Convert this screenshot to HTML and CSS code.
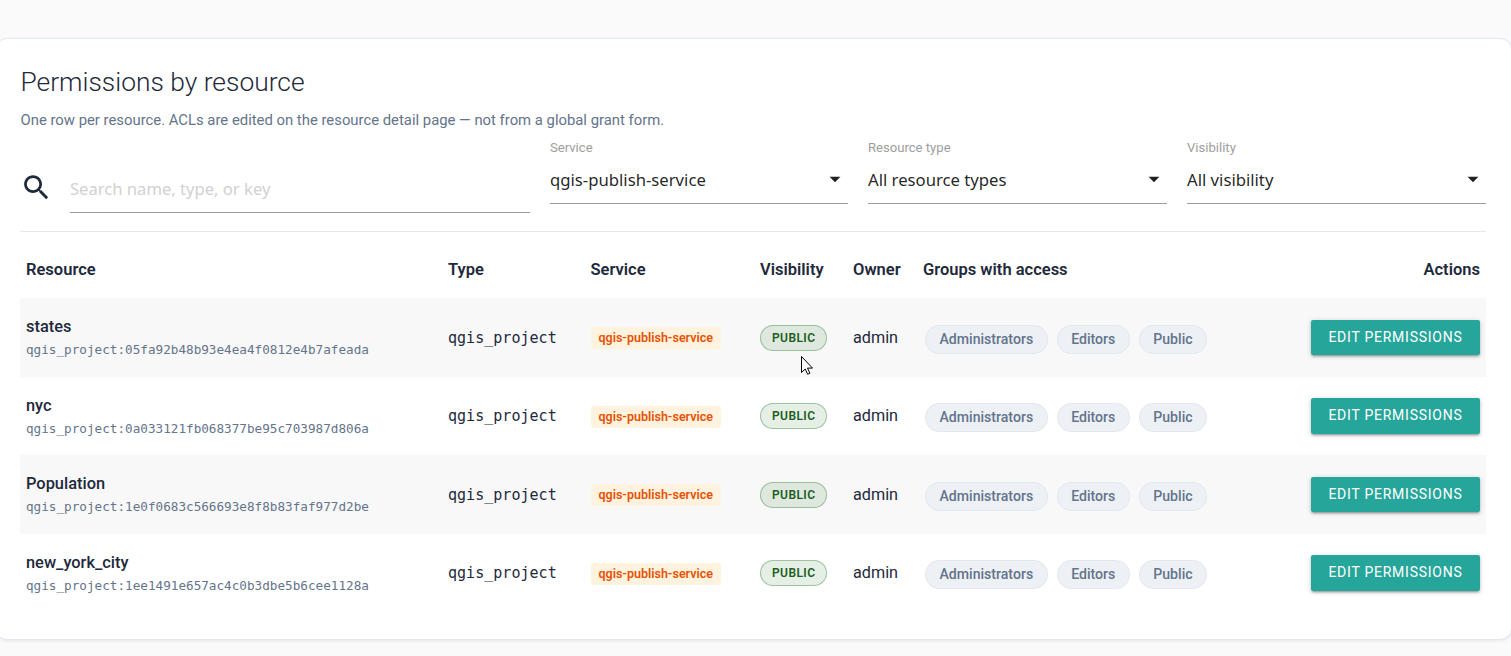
FILE: index.html
```html
<!DOCTYPE html>
<html lang="en">
<head>
  <meta charset="UTF-8">
  <meta name="viewport" content="width=device-width, initial-scale=1.0">
  <title>Permissions by resource</title>
  <link rel="stylesheet" href="styles.css">
</head>
<body>
  <section class="card">
    <h1 class="card-title">Permissions by resource</h1>
    <p class="card-hint">One row per resource. ACLs are edited on the resource detail page — not from a global grant form.</p>

    <div class="filters">
      <div class="search-field">
        <svg class="search-icon" viewBox="0 0 24 24"><path d="M15.5 14h-.79l-.28-.27C15.41 12.59 16 11.11 16 9.5 16 5.91 13.09 3 9.5 3S3 5.91 3 9.5 5.91 16 9.5 16c1.61 0 3.09-.59 4.23-1.57l.27.28v.79l5 4.99L20.49 19l-4.99-5zm-6 0C7.01 14 5 11.99 5 9.5S7.01 5 9.5 5 14 7.01 14 9.5 11.99 14 9.5 14z"/></svg>
        <input class="search-input" type="text" placeholder="Search name, type, or key">
      </div>
      <div class="select-field">
        <label>Service</label>
        <div class="select-value">
          <span>qgis-publish-service</span>
          <svg class="caret" viewBox="0 0 24 24"><path d="M7 10l5 5 5-5z"/></svg>
        </div>
      </div>
      <div class="select-field">
        <label>Resource type</label>
        <div class="select-value">
          <span>All resource types</span>
          <svg class="caret" viewBox="0 0 24 24"><path d="M7 10l5 5 5-5z"/></svg>
        </div>
      </div>
      <div class="select-field">
        <label>Visibility</label>
        <div class="select-value">
          <span>All visibility</span>
          <svg class="caret" viewBox="0 0 24 24"><path d="M7 10l5 5 5-5z"/></svg>
        </div>
      </div>
    </div>

    <table class="acl-table">
      <colgroup>
        <col class="col-resource">
        <col class="col-type">
        <col class="col-service">
        <col class="col-visibility">
        <col class="col-owner">
        <col class="col-groups">
        <col class="col-actions">
      </colgroup>
      <thead>
        <tr>
          <th>Resource</th>
          <th>Type</th>
          <th>Service</th>
          <th>Visibility</th>
          <th>Owner</th>
          <th>Groups with access</th>
          <th class="actions">Actions</th>
        </tr>
      </thead>
      <tbody>
        <tr>
          <td><div class="name">states</div><div class="key">qgis_project:05fa92b48b93e4ea4f0812e4b7afeada</div></td>
          <td><code>qgis_project</code></td>
          <td><span class="service">qgis-publish-service</span></td>
          <td><span class="visibility">Public</span></td>
          <td>admin</td>
          <td><div class="groups"><span class="chip">Administrators</span><span class="chip">Editors</span><span class="chip">Public</span></div></td>
          <td class="actions"><a class="btn">Edit permissions</a></td>
        </tr>
        <tr>
          <td><div class="name">nyc</div><div class="key">qgis_project:0a033121fb068377be95c703987d806a</div></td>
          <td><code>qgis_project</code></td>
          <td><span class="service">qgis-publish-service</span></td>
          <td><span class="visibility">Public</span></td>
          <td>admin</td>
          <td><div class="groups"><span class="chip">Administrators</span><span class="chip">Editors</span><span class="chip">Public</span></div></td>
          <td class="actions"><a class="btn">Edit permissions</a></td>
        </tr>
        <tr>
          <td><div class="name">Population</div><div class="key">qgis_project:1e0f0683c566693e8f8b83faf977d2be</div></td>
          <td><code>qgis_project</code></td>
          <td><span class="service">qgis-publish-service</span></td>
          <td><span class="visibility">Public</span></td>
          <td>admin</td>
          <td><div class="groups"><span class="chip">Administrators</span><span class="chip">Editors</span><span class="chip">Public</span></div></td>
          <td class="actions"><a class="btn">Edit permissions</a></td>
        </tr>
        <tr>
          <td><div class="name">new_york_city</div><div class="key">qgis_project:1ee1491e657ac4c0b3dbe5b6cee1128a</div></td>
          <td><code>qgis_project</code></td>
          <td><span class="service">qgis-publish-service</span></td>
          <td><span class="visibility">Public</span></td>
          <td>admin</td>
          <td><div class="groups"><span class="chip">Administrators</span><span class="chip">Editors</span><span class="chip">Public</span></div></td>
          <td class="actions"><a class="btn">Edit permissions</a></td>
        </tr>
      </tbody>
    </table>
  </section>

  <svg class="pointer" viewBox="0 0 12 19"><path d="M.5.5v16l3.7-3.5 2.4 5.2 2.3-1-2.4-5.1h5z"/></svg>
</body>
</html>
```

FILE: styles.css
```css
* {
  box-sizing: border-box;
}
body {
  margin: 0;
  padding-top: 38px;
  height: 656px;
  overflow: hidden;
  background-color: #fafafa;
  color: #1e293b;
  font-family: Roboto, sans-serif;
  font-size: 16px;
}
.card {
  width: 1517px;
  height: 602px;
  margin-left: -5px;
  padding: 24px;
  background-color: #ffffff;
  border: 1px solid #e2e8f0;
  border-radius: 12px;
  box-shadow: 0 1px 3px rgba(0, 0, 0, 0.08);
}
.card-title {
  margin: 0;
  padding-left: 0.5px;
  font-size: 26.4px;
  font-weight: 300;
  line-height: 38px;
}
.card-hint {
  margin: 8px 0 0;
  padding-left: 0.5px;
  font-size: 14.85px;
  line-height: 22px;
  color: #64748b;
}

/* filters */
.filters {
  display: grid;
  grid-template-columns: 510px 298px 299px 299px;
  column-gap: 20px;
  width: 1466px;
  height: 101px;
  border-bottom: 1px solid #e2e8f0;
}
.search-field {
  display: flex;
  padding-top: 34px;
}
.search-icon {
  width: 33px;
  height: 33px;
  margin-top: 6px;
  fill: #1e293b;
}
.search-input {
  flex: 1;
  height: 48px;
  margin-left: 17px;
  padding: 0;
  border: none;
  border-bottom: 1px solid #9e9e9e;
  background: transparent;
  font-family: "Noto Sans", sans-serif;
  font-size: 16.6px;
}
.search-input::placeholder {
  color: #d1d1d1;
}
.select-field label {
  display: block;
  padding-top: 9px;
  font-size: 13.1px;
  line-height: 15px;
  color: #9e9e9e;
}
.select-value {
  display: flex;
  justify-content: space-between;
  align-items: center;
  height: 49px;
  border-bottom: 1px solid #9e9e9e;
  color: rgba(0, 0, 0, 0.87);
  font-family: "Noto Sans", sans-serif;
  font-size: 16.7px;
}
.caret {
  width: 26px;
  height: 26px;
  fill: rgba(0, 0, 0, 0.87);
}

/* table */
.acl-table {
  width: 1466px;
  table-layout: fixed;
  border-collapse: collapse;
}
.col-resource { width: 422px; }
.col-type { width: 142.5px; }
.col-service { width: 169.5px; }
.col-visibility { width: 93px; }
.col-owner { width: 70px; }
.col-groups { width: 350px; }
th,
td {
  padding: 0 6px;
  text-align: left;
  vertical-align: middle;
  white-space: nowrap;
}
th {
  height: 66px;
  padding-top: 8px;
  font-size: 16.5px;
  font-weight: 600;
}
td {
  height: 78.5px;
  font-size: 16.2px;
}
tbody tr:nth-child(odd) {
  background-color: #f8f8f8;
}
th.actions,
td.actions {
  text-align: right;
}
.name {
  padding-top: 1px;
  font-size: 16.4px;
  font-weight: 500;
  line-height: 24px;
}
.key {
  font-family: "DejaVu Sans Mono", monospace;
  font-size: 12.66px;
  line-height: 21px;
  color: #64748b;
}
code {
  font-family: "DejaVu Sans Mono", monospace;
  font-size: 15.05px;
}
.service {
  display: inline-block;
  margin-top: 2px;
  padding: 0 8px;
  border-radius: 4px;
  background-color: #fff3e0;
  color: #e65100;
  font-size: 12.5px;
  font-weight: 600;
  line-height: 22px;
}
.visibility {
  display: inline-block;
  margin-top: 1px;
  padding: 0 11px;
  border: 1px solid rgba(46, 125, 50, 0.4);
  border-radius: 13px;
  background-color: rgba(46, 125, 50, 0.12);
  color: #1b5e20;
  font-size: 12px;
  font-weight: 600;
  letter-spacing: 0.4px;
  line-height: 24px;
  text-transform: uppercase;
}
.groups {
  display: flex;
  gap: 9px;
  padding: 4px 2px 0;
}
.chip {
  padding: 0 13.5px;
  border: 1px solid #e2e8f0;
  border-radius: 14px;
  background-color: #edf1f6;
  color: #64748b;
  font-size: 14.1px;
  font-weight: 500;
  line-height: 27px;
}
.btn {
  display: inline-block;
  padding: 0 17.5px;
  border-radius: 2px;
  background-color: #26a69a;
  box-shadow: 0 2px 2px 0 rgba(0, 0, 0, 0.14), 0 3px 1px -2px rgba(0, 0, 0, 0.12), 0 1px 5px 0 rgba(0, 0, 0, 0.2);
  color: #ffffff;
  font-size: 14px;
  letter-spacing: 0.75px;
  line-height: 35.5px;
  text-transform: uppercase;
}

.pointer {
  position: absolute;
  left: 801px;
  top: 356px;
  width: 12px;
  height: 19px;
  fill: #ffffff;
  stroke: #000000;
}
```
